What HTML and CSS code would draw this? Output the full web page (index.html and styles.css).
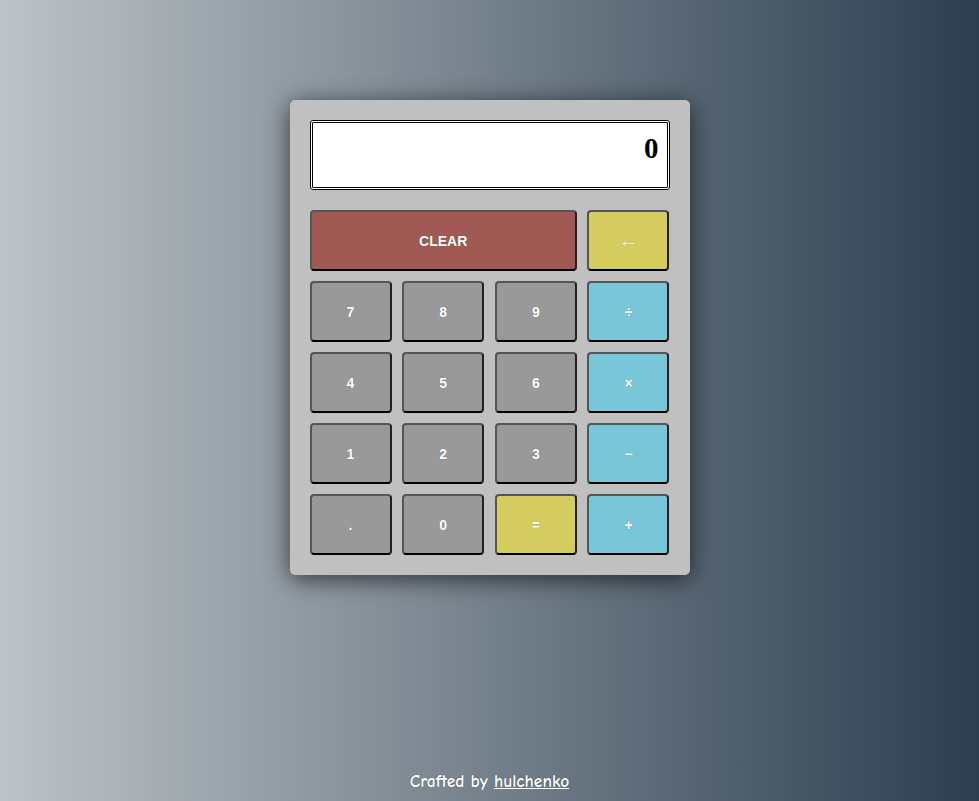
FILE: index.html
```html
<!DOCTYPE html>
<html lang="en">
<head>
<meta charset="utf-8">
<title>Calculator</title>
<link rel="stylesheet" href="styles.css">
</head>
<body>
<main class="page">
  <div class="calculator">
    <div class="display">0</div>
    <div class="keys">
      <button class="key key-clear">CLEAR</button>
      <button class="key key-yellow key-back">&larr;</button>
      <button class="key">7</button>
      <button class="key">8</button>
      <button class="key">9</button>
      <button class="key key-blue">&divide;</button>
      <button class="key">4</button>
      <button class="key">5</button>
      <button class="key">6</button>
      <button class="key key-blue">&times;</button>
      <button class="key">1</button>
      <button class="key">2</button>
      <button class="key">3</button>
      <button class="key key-blue">&minus;</button>
      <button class="key">.</button>
      <button class="key">0</button>
      <button class="key key-yellow">=</button>
      <button class="key key-blue">+</button>
    </div>
  </div>
</main>
<footer class="footer">Crafted by <a href="#" class="footer-link">hulchenko</a></footer>
</body>
</html>
```

FILE: styles.css
```css
html, body {
  margin: 0;
  padding: 0;
}

body {
  height: 801px;
  display: flex;
  flex-direction: column;
  align-items: center;
  background: linear-gradient(to right, #bdc3c7, #2c3e50);
  font-family: "Liberation Sans", Arial, sans-serif;
  overflow: hidden;
}

.page {
  flex: 1;
  padding-top: 100px;
}

.calculator {
  width: 360px;
  padding: 20px;
  background: #c0c0c0;
  border-radius: 5px;
  box-shadow: 0 4px 24px rgba(0, 0, 0, 0.65);
}

.display {
  box-sizing: border-box;
  height: 70px;
  border: 3px double #000;
  border-radius: 3px;
  background: #fff;
  text-align: right;
  padding: 7px 8px 0 0;
  font-family: "Liberation Serif", "Times New Roman", serif;
  font-weight: bold;
  font-size: 29px;
  line-height: 36px;
  color: #000;
}

.keys {
  margin-top: 20px;
  display: grid;
  grid-template-columns: repeat(4, 82px);
  grid-auto-rows: 61px;
  gap: 10px 10.67px;
}

.key {
  box-sizing: border-box;
  border: 2px solid;
  border-color: #555 #222 #000 #555;
  border-radius: 4px;
  background: #999;
  color: #fff;
  font-family: "Liberation Sans", Arial, sans-serif;
  font-weight: bold;
  font-size: 14px;
  padding: 0;
  text-shadow: 0 0 1px rgba(0, 0, 0, 0.35);
}

.key-clear {
  grid-column: span 3;
  background: #a05a53;
}

.key-yellow {
  background: #d4cc5e;
}

.key-blue {
  background: #7ac6d9;
}

.key-back {
  font-family: "Liberation Serif", "Times New Roman", serif;
  font-weight: normal;
  font-size: 20px;
}

.footer {
  padding-bottom: 10px;
  font-family: "Comic Sans MS", "Comic Neue", "DejaVu Sans", cursive;
  font-weight: bold;
  font-size: 17.5px;
  color: #fff;
  text-shadow: 0 0 1px rgba(0, 0, 0, 0.5);
}

.footer-link {
  color: #fff;
  text-decoration: underline;
}
```
